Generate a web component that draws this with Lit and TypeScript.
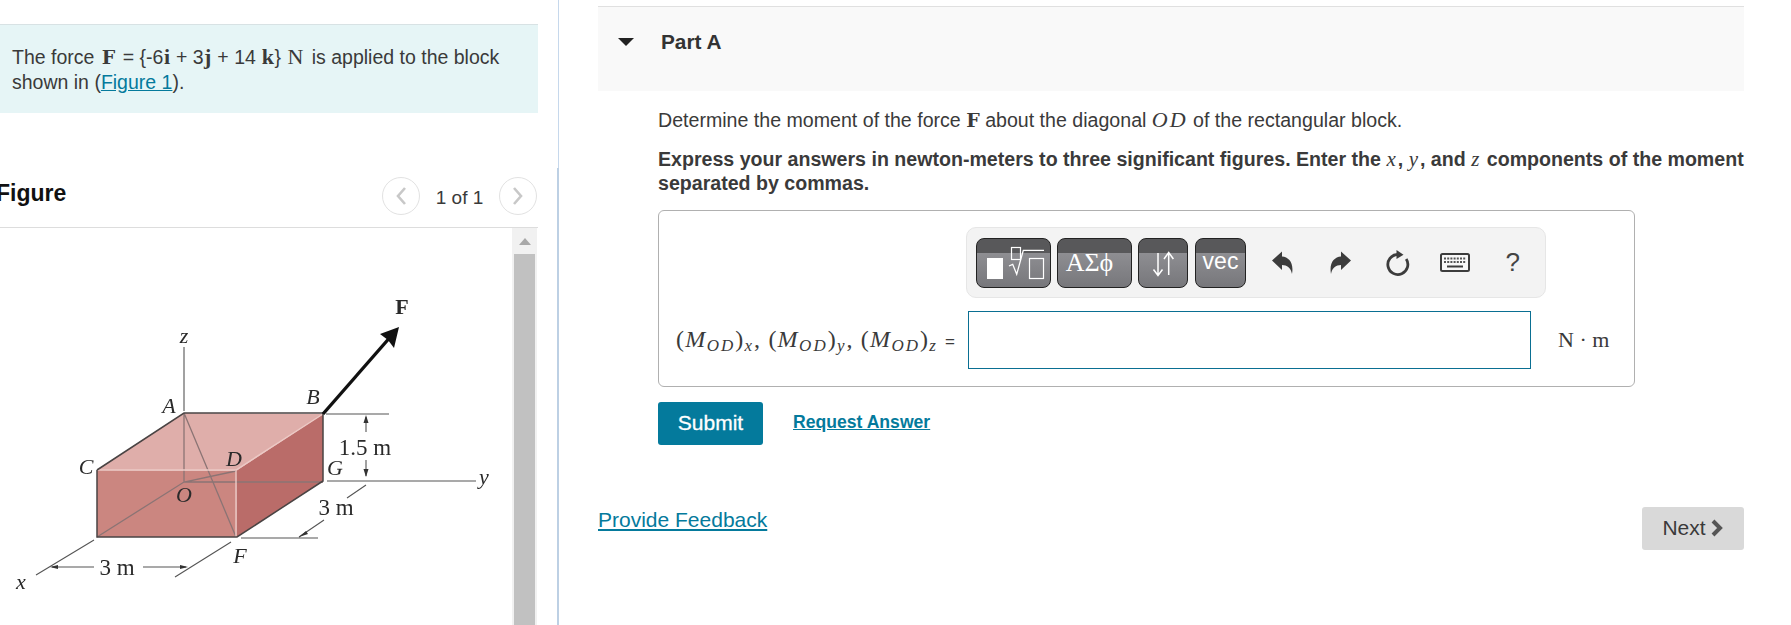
import { LitElement, html, css, svg } from "lit";
import { customElement } from "lit/decorators.js";

const figure = svg`
  <polygon points="184,413 323,414 236,471 97,470" fill="#dfaeaa"/>
  <polygon points="97,470 236,471 237,537 97,537" fill="#cb8680"/>
  <polygon points="236,471 323,414 323,481 237,537" fill="#ba6c69"/>
  <g fill="none" stroke="#8b7474" stroke-width="1.3">
    <path d="M184 413V482M184 413L236 537M97 537L184 482L236 471M184 482H323"/>
  </g>
  <g fill="none" stroke="#ecc9c5" stroke-width="1.4">
    <path d="M97 470H236L323 414M236 471V537"/>
  </g>
  <g fill="none" stroke="#4a4444" stroke-width="1.5">
    <path d="M97 470L184 413H323V481L237 537H97V470"/>
  </g>
  <g fill="none" stroke="#555" stroke-width="1.1">
    <path d="M184 347V411M326 414H389M327 481H476M241 538H318M94 540L36 575M231 542L175 577M366 417V432M366 460V476M366 485L347 498M324 520L299 537M52 567H94M143 567H186"/>
  </g>
  <path d="M323 414L392 335" stroke="#111" stroke-width="3.4" fill="none"/>
  <polygon points="399,327 394,348 388,340 380,334" fill="#111"/>
  <g fill="#333">
    <polygon points="366,415 363.5,423 368.5,423"/>
    <polygon points="366,477 363.5,469 368.5,469"/>
    <polygon points="50,567 58,565 58,569"/>
    <polygon points="188,567 180,565 180,569"/>
    <polygon points="299,537 306,531 308,534"/>
  </g>
  <g class="ital">
    <text x="184" y="343">z</text>
    <text x="169" y="413">A</text>
    <text x="313" y="404">B</text>
    <text x="86" y="474">C</text>
    <text x="234" y="466">D</text>
    <text x="335" y="475">G</text>
    <text x="184" y="502">O</text>
    <text x="240" y="563">F</text>
    <text x="21" y="589">x</text>
    <text x="484" y="484">y</text>
  </g>
  <text x="402" y="314" class="bold">F</text>
  <g class="reg">
    <text x="365" y="455">1.5 m</text>
    <text x="336" y="515">3 m</text>
    <text x="117" y="575">3 m</text>
  </g>
`;

@customElement("app-root")
export class AppRoot extends LitElement {
  static styles = css`
    :host { display: block; width: 1791px; height: 625px; overflow: hidden; background: #fff;
      font-family: "Liberation Sans", Arial, sans-serif; color: #3a3a3a; font-size: 19.6px; }
    .page { display: flex; height: 625px; }
    .left { width: 557px; flex: none; height: 625px; overflow: hidden; }
    .divider { width: 2px; flex: none; display: flex; flex-direction: column; align-items: flex-end; }
    .divider .top { width: 1px; height: 168px; background: #c6d8ec; }
    .divider .bot { width: 2px; flex: 1; background: #bdd0e4; }
    .banner { width: 538px; box-sizing: border-box; margin-top: 24px; height: 89px; padding: 19px 12px 0;
      background: #e6f5f6; border-top: 1px solid #d8e2e4; line-height: 25px; white-space: nowrap; font-size: 19.5px; }
    .banner .mf { margin: 0 2px; }
    .m { font-family: "Liberation Serif", serif; font-size: 22px; margin: 0 3px 0 1px; }
    .mb { font-family: "Liberation Serif", serif; font-weight: bold; font-size: 22px; margin: 0 0.5px; }
    .mf { font-family: "DejaVu Serif", serif; font-weight: bold; font-size: 19px; }
    .mi { font-family: "Liberation Serif", serif; font-style: italic; font-weight: 400; font-size: 21px; letter-spacing: 2px; }
    .od { letter-spacing: 2px; font-size: 22px; }
    a { color: #047a9c; text-decoration: underline; }
    .fighead { width: 538px; height: 115px; box-sizing: border-box; border-bottom: 1px solid #ddd; display: flex; align-items: flex-end; padding: 0 1px 12px 0; }
    .figtitle { font-size: 23px; font-weight: bold; color: #111; margin-left: -4px; margin-bottom: 9px; flex: 1; line-height: 26px; }
    .pager { display: flex; align-items: center; }
    .circ { width: 38px; height: 38px; border: 1px solid #e2e2e2; border-radius: 50%; box-sizing: border-box; display: flex; align-items: center; justify-content: center; background: #fff; }
    .count { width: 79px; text-align: center; font-size: 19px; padding-top: 3px; }
    .figbody { position: relative; width: 538px; height: 398px; }
    .figure { position: absolute; left: 0; top: -228px; width: 512px; height: 625px; filter: blur(0.35px); }
    .figure text { font-family: "Liberation Serif", serif; font-size: 22px; fill: #2a2a2a; text-anchor: middle; }
    .figure .ital text { font-style: italic; }
    .figure .bold { font-weight: bold; font-size: 22px; }
    .figure .reg text { font-size: 23px; }
    .sb { position: absolute; left: 512px; top: 0; width: 25px; height: 398px; background: #f1f1f1; display: flex; flex-direction: column; align-items: center; }
    .sb .up { height: 26px; width: 25px; display: flex; align-items: center; justify-content: center; }
    .sb .thumb { flex: 1; width: 21px; background: #c1c1c1; }
    .right { flex: 1; padding: 6px 47px 0 39px; min-width: 0; }
    .part { height: 85px; background: #f9f9f9; border-top: 1px solid #e0e0e0; display: flex; align-items: flex-start; box-sizing: border-box; padding: 24px 0 0 20px; font-weight: bold; font-size: 20.8px; color: #333; }
    .part svg { margin: 7px 27px 0 0; }
    .part span { line-height: 22px; }
    .content { padding-left: 60px; }
    .p1 { margin-top: 17px; line-height: 24px; white-space: nowrap; }
    .p2 { margin-top: 15px; font-weight: bold; line-height: 24px; white-space: nowrap; }
    .box { margin-top: 15px; width: 977px; height: 177px; box-sizing: border-box; border: 1px solid #b0b0b0; border-radius: 6px; padding: 16px 0 0 0; }
    .toolbar { margin-left: 307px; width: 580px; height: 71px; box-sizing: border-box; background: #f3f3f3; border: 1px solid #e6e6e6; border-radius: 10px; display: flex; align-items: center; padding-left: 9px; }
    .tb { height: 50px; box-sizing: border-box; border: 1px solid #222; border-radius: 8px; margin-right: 6px; color: #fff; flex: none; display: flex; align-items: center; justify-content: center;
      background: linear-gradient(#58585a 0, #58585a 14px, #8e8e92 14px, #77777b 100%); }
    .tb.w75 { width: 75px; }
    .tb.arrows { width: 50px; margin-right: 7px; }
    .tb.vecb { width: 51px; margin-right: 0; }
    .greek { font-family: "Liberation Serif", serif; font-size: 26px; padding-right: 10px; }
    .vec { font-size: 23px; padding-bottom: 2px; }
    .tools { display: flex; align-items: center; margin-left: 8px; }
    .tool { width: 57.5px; display: flex; justify-content: center; align-items: center; height: 30px; color: #444; }
    .q { font-size: 26px; }
    .row { display: flex; align-items: center; margin-top: 13px; }
    .label { width: 309px; flex: none; box-sizing: border-box; padding: 0 0 2px 17px; font-family: "Liberation Serif", serif; font-size: 24px; letter-spacing: 1.2px; white-space: nowrap; color: #3a3a3a; }
    .label i { font-style: italic; letter-spacing: 1.5px; }
    .label sub { font-size: 17px; line-height: 0; vertical-align: -4px; font-style: italic; letter-spacing: 2px; }
    .label .eq { font-family: "Liberation Sans", sans-serif; font-size: 17px; }
    .input { width: 563px; height: 58px; box-sizing: border-box; border: 1px solid #0a6f92; background: #fff; flex: none; }
    .unit { margin-left: 27px; font-family: "Liberation Serif", serif; font-size: 22px; white-space: nowrap; }
    .actions { display: flex; align-items: center; margin-top: 15px; }
    .submit { width: 105px; height: 43px; box-sizing: border-box; padding-bottom: 2px; border-radius: 3px; background: #047a9c; color: #fff; font-size: 21px; -webkit-text-stroke: 0.3px #fff; display: flex; align-items: center; justify-content: center; }
    .req { margin-left: 30px; font-weight: bold; font-size: 17.6px; margin-top: -3px; }
    .foot { display: flex; justify-content: space-between; align-items: flex-start; margin-top: 63px; }
    .fb { font-size: 21px; line-height: 24px; }
    .next { width: 102px; height: 43px; box-sizing: border-box; padding: 0 1px 2px 0; background: #d9d9d9; border-radius: 3px; display: flex; align-items: center; justify-content: center; gap: 4px; font-size: 21px; margin-top: -1px; }
  `;

  render() {
    return html`<div class="page">
      <div class="left">
        <div class="banner">The force <span class="mf">F</span> = {-6<span class="mb">i</span> + 3<span class="mb">j</span> + 14 <span class="mb">k</span>} <span class="m">N</span> is applied to the block<br>shown in (<a>Figure 1</a>).</div>
        <div class="fighead">
          <div class="figtitle">Figure</div>
          <div class="pager">
            <div class="circ"><svg width="12" height="20" viewBox="0 0 12 20"><path d="M10 2L3 10L10 18" fill="none" stroke="#c8c8c8" stroke-width="2.6"/></svg></div>
            <div class="count">1 of 1</div>
            <div class="circ"><svg width="12" height="20" viewBox="0 0 12 20"><path d="M2 2L9 10L2 18" fill="none" stroke="#c8c8c8" stroke-width="2.6"/></svg></div>
          </div>
        </div>
        <div class="figbody">
          <svg class="figure" viewBox="0 0 512 625">${figure}</svg>
          <div class="sb">
            <div class="up"><svg width="12" height="7" viewBox="0 0 12 7"><polygon points="6,0 12,7 0,7" fill="#a8a8a8"/></svg></div>
            <div class="thumb"></div>
          </div>
        </div>
      </div>
      <div class="divider"><div class="top"></div><div class="bot"></div></div>
      <div class="right">
        <div class="part"><svg width="16" height="8" viewBox="0 0 16 8"><polygon points="0,0 16,0 8,8" fill="#222"/></svg><span>Part A</span></div>
        <div class="content">
          <div class="p1">Determine the moment of the force <span class="mf">F</span> about the diagonal <span class="mi od">OD</span> of the rectangular block.</div>
          <div class="p2">Express your answers in newton-meters to three significant figures. Enter the <span class="mi">x</span>, <span class="mi">y</span>, and <span class="mi">z</span> components of the moment<br>separated by commas.</div>
          <div class="box">
            <div class="toolbar">
              <div class="tb w75"><svg width="73" height="48" viewBox="1 1 73 48"><rect x="11" y="20" width="16" height="21" fill="#fff"/><rect x="35.5" y="9.5" width="9" height="12" fill="none" stroke="#fff" stroke-width="1.2"/><path d="M33 28L36.7 26.3L40.7 36.3L47.3 12.3H68" fill="none" stroke="#fff" stroke-width="1.3"/><rect x="53.5" y="20.5" width="14" height="20" fill="none" stroke="#fff" stroke-width="1.2"/></svg></div>
              <div class="tb w75"><span class="greek">ΑΣϕ</span></div>
              <div class="tb arrows"><svg width="48" height="48" viewBox="1 1 48 48"><path d="M20 15V37M15.5 31.5L20 37.5L24.5 31.5M30.7 37V15M26 21L30.7 14.5L35.4 21" fill="none" stroke="#fff" stroke-width="1.5"/></svg></div>
              <div class="tb vecb"><span class="vec">vec</span></div>
              <div class="tools">
                <div class="tool"><svg width="22" height="24" viewBox="0 0 22 24"><path d="M0 9.5L10 .5V5.5C17 6 22 12 20 23C19 17 15 14 10 14V19Z" fill="#3c3c3c"/></svg></div>
                <div class="tool"><svg width="22" height="24" viewBox="0 0 22 24"><path d="M22 9.5L12 .5V5.5C5 6 0 12 2 23C3 17 7 14 12 14V19Z" fill="#3c3c3c"/></svg></div>
                <div class="tool"><svg width="27" height="28" viewBox="0 0 27 28"><path d="M13.5 5.5A10 10 0 1 0 22.2 10" fill="none" stroke="#3c3c3c" stroke-width="2.8"/><polygon points="12.5,1 19.5,5.7 12.5,10" fill="#3c3c3c"/></svg></div>
                <div class="tool"><svg width="30" height="19" viewBox="0 0 30 19"><rect x="1" y="1" width="28" height="17" rx="1.5" fill="#f8f8f8" stroke="#3c3c3c" stroke-width="2"/><path d="M4 5.5H26M4 9H26" stroke="#555" stroke-width="1.8" stroke-dasharray="2 1.2"/><path d="M7 13.5H23" stroke="#3c3c3c" stroke-width="2"/></svg></div>
                <div class="tool q">?</div>
              </div>
            </div>
            <div class="row">
              <div class="label">(<i>M</i><sub>OD</sub>)<sub>x</sub>, (<i>M</i><sub>OD</sub>)<sub>y</sub>, (<i>M</i><sub>OD</sub>)<sub>z</sub> <span class="eq">=</span></div>
              <div class="input"></div>
              <div class="unit">N · m</div>
            </div>
          </div>
          <div class="actions"><div class="submit">Submit</div><a class="req">Request Answer</a></div>
        </div>
        <div class="foot">
          <a class="fb">Provide Feedback</a>
          <div class="next">Next <svg width="13" height="18" viewBox="0 0 13 18"><path d="M3 2L10 9L3 16" fill="none" stroke="#555" stroke-width="4"/></svg></div>
        </div>
      </div>
    </div>`;
  }
}
